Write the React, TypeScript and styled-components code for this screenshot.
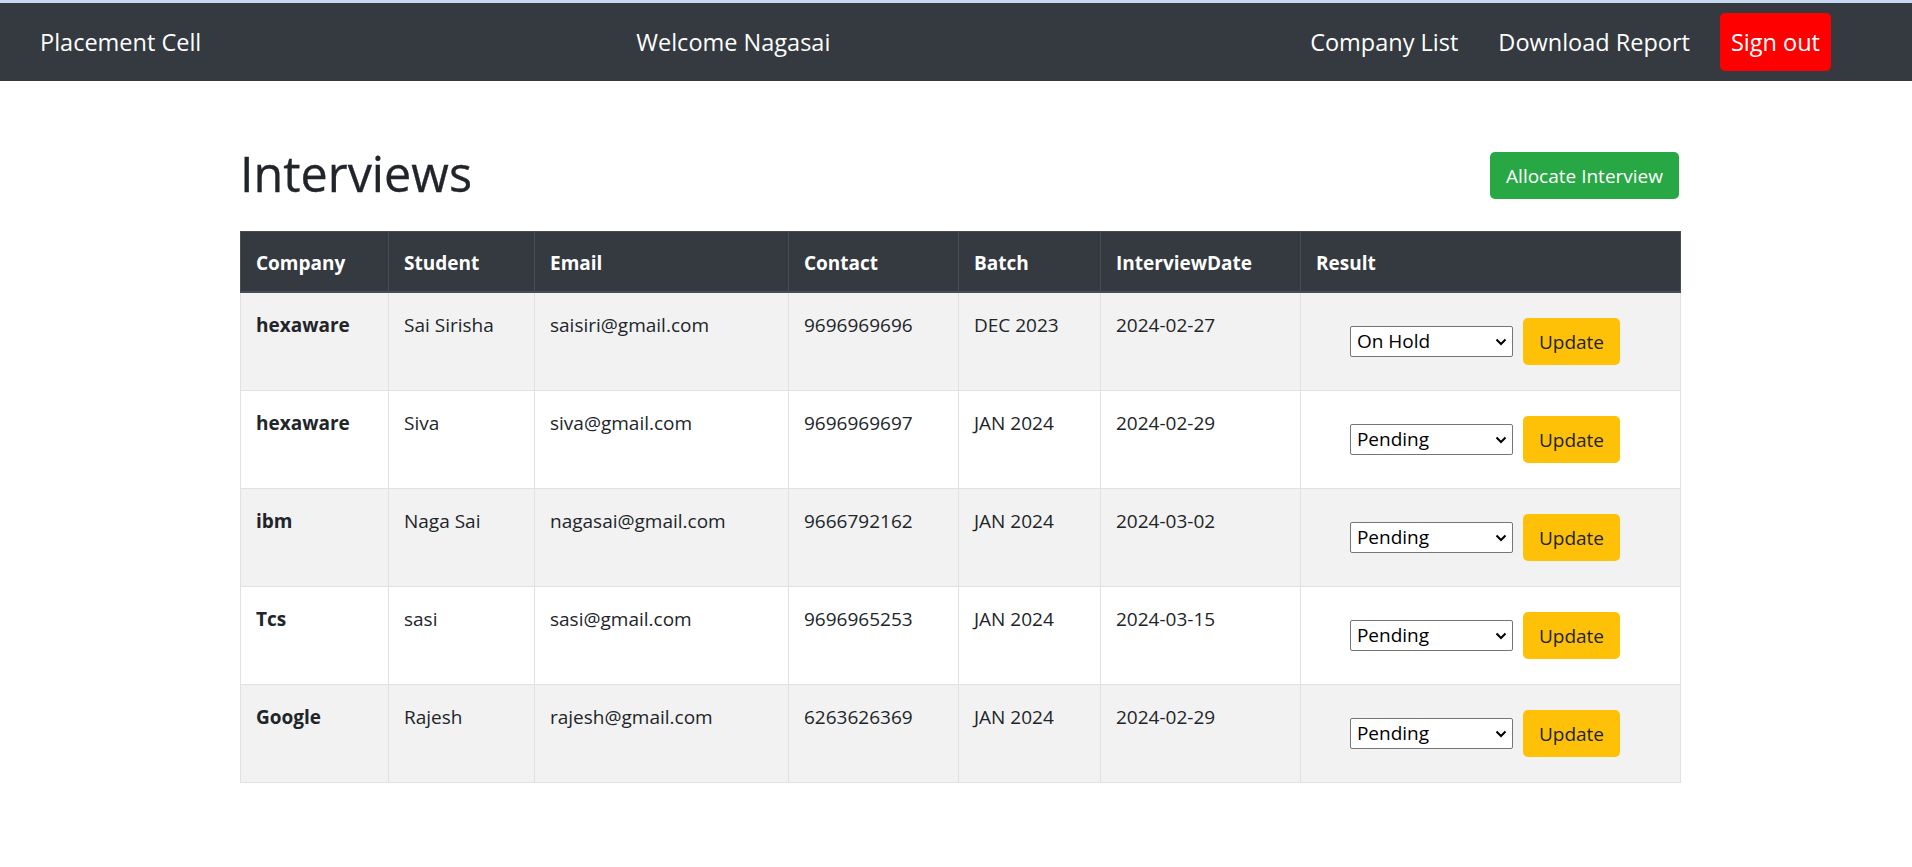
import React from "react";
import styled, { createGlobalStyle } from "styled-components";

const GlobalStyle = createGlobalStyle`
  html, body { margin: 0; padding: 0; background: #ffffff; }
  body {
    font-family: "Open Sans", "Noto Sans", "Liberation Sans", sans-serif;
    color: #212529;
    font-size: 19px;
    line-height: 30px;
  }
  * { box-sizing: border-box; }
`;

const TopStrip = styled.div`
  height: 3px;
  background: #c6d9f1;
`;

const Navbar = styled.nav`
  display: flex;
  align-items: center;
  height: 78px;
  background: #343a40;
  padding: 0 81px 0 40px;
`;

const Brand = styled.a`
  color: #ffffff;
  font-size: 23.5px;
  line-height: 35px;
  text-decoration: none;
  white-space: nowrap;
`;

const Welcome = styled.span`
  color: #ffffff;
  font-size: 23.5px;
  line-height: 35px;
  margin-left: 435px;
  white-space: nowrap;
`;

const NavLinks = styled.div`
  display: flex;
  align-items: center;
  margin-left: auto;
`;

const NavLink = styled.a<{ $gap: number }>`
  color: #ffffff;
  font-size: 23.5px;
  line-height: 35px;
  text-decoration: none;
  white-space: nowrap;
  margin-right: ${(p) => p.$gap}px;
`;

const SignOut = styled.button`
  background: #ff0000;
  color: #ffffff;
  border: none;
  border-radius: 5px;
  font-family: inherit;
  font-size: 23.5px;
  line-height: 35px;
  height: 58px;
  padding: 0 11px;
  cursor: pointer;
`;

const Main = styled.main`
  width: 1440px;
  margin-left: 240px;
  padding-top: 62px;
`;

const HeaderRow = styled.div`
  display: flex;
  align-items: flex-start;
  justify-content: space-between;
  height: 60px;
  margin-bottom: 28px;
`;

const Title = styled.h1`
  margin: 0;
  font-size: 48.5px;
  font-weight: 500;
  line-height: 60px;
  color: #212529;
  -webkit-text-stroke: 0.3px #212529;
`;

const Button = styled.button<{ $variant: "success" | "warning" }>`
  border: none;
  border-radius: 5px;
  font-family: inherit;
  font-size: 19px;
  line-height: 30px;
  height: 47px;
  padding: 0 16px;
  cursor: pointer;
  background: ${(p) => (p.$variant === "success" ? "#28a745" : "#ffc107")};
  color: ${(p) => (p.$variant === "success" ? "#ffffff" : "#212529")};
`;

const Allocate = styled(Button)`
  margin-top: 9px;
  margin-right: 1px;
`;

const Table = styled.table`
  width: 1440px;
  border-collapse: collapse;
  table-layout: fixed;
`;

const Th = styled.th`
  background: #343a40;
  color: #ffffff;
  font-weight: 700;
  text-align: left;
  padding: 16px 15px 13px;
  border: 1px solid #454d55;
  border-bottom-width: 2px;
  line-height: 30px;
`;

const Tr = styled.tr<{ $striped: boolean }>`
  background: ${(p) => (p.$striped ? "#f2f2f2" : "#ffffff")};
`;

const Td = styled.td<{ $bold?: boolean }>`
  padding: 17px 15px 13px;
  border: 1px solid #dee2e6;
  vertical-align: top;
  font-weight: ${(p) => (p.$bold ? 700 : 400)};
  line-height: 30px;
`;

const ResultCell = styled.td`
  padding: 25px 26px 25px 15px;
  border: 1px solid #dee2e6;
  vertical-align: top;
`;

const ResultForm = styled.form`
  display: flex;
  align-items: center;
  justify-content: center;
  gap: 10px;
`;

const SelectWrap = styled.div`
  position: relative;
  width: 163px;
  height: 31px;
`;

const Select = styled.select`
  appearance: none;
  -webkit-appearance: none;
  width: 163px;
  height: 31px;
  border: 1px solid #767676;
  border-radius: 2px;
  background: #ffffff;
  font-family: inherit;
  font-size: 19px;
  color: #000000;
  padding: 0 24px 0 6px;
  line-height: 29px;
`;

const Chevron = styled.svg`
  position: absolute;
  right: 6px;
  top: 12px;
  width: 12px;
  height: 8px;
  pointer-events: none;
`;

type Row = {
  company: string;
  student: string;
  email: string;
  contact: string;
  batch: string;
  date: string;
  result: string;
};

const rows: Row[] = [
  { company: "hexaware", student: "Sai Sirisha", email: "saisiri@gmail.com", contact: "9696969696", batch: "DEC 2023", date: "2024-02-27", result: "On Hold" },
  { company: "hexaware", student: "Siva", email: "siva@gmail.com", contact: "9696969697", batch: "JAN 2024", date: "2024-02-29", result: "Pending" },
  { company: "ibm", student: "Naga Sai", email: "nagasai@gmail.com", contact: "9666792162", batch: "JAN 2024", date: "2024-03-02", result: "Pending" },
  { company: "Tcs", student: "sasi", email: "sasi@gmail.com", contact: "9696965253", batch: "JAN 2024", date: "2024-03-15", result: "Pending" },
  { company: "Google", student: "Rajesh", email: "rajesh@gmail.com", contact: "6263626369", batch: "JAN 2024", date: "2024-02-29", result: "Pending" },
];

const columns = [
  { label: "Company", width: 148 },
  { label: "Student", width: 146 },
  { label: "Email", width: 254 },
  { label: "Contact", width: 170 },
  { label: "Batch", width: 142 },
  { label: "InterviewDate", width: 200 },
  { label: "Result", width: 380 },
];

const options = ["Pending", "Selected", "Not Selected", "On Hold", "Did not Attempt"];

export default function App() {
  return (
    <>
      <GlobalStyle />
      <TopStrip />
      <Navbar>
        <Brand href="#">Placement Cell</Brand>
        <Welcome>Welcome Nagasai</Welcome>
        <NavLinks>
          <NavLink href="#" $gap={40}>Company List</NavLink>
          <NavLink href="#" $gap={30}>Download Report</NavLink>
          <SignOut>Sign out</SignOut>
        </NavLinks>
      </Navbar>
      <Main>
        <HeaderRow>
          <Title>Interviews</Title>
          <Allocate $variant="success">Allocate Interview</Allocate>
        </HeaderRow>
        <Table>
          <colgroup>
            {columns.map((c) => (
              <col key={c.label} style={{ width: c.width }} />
            ))}
          </colgroup>
          <thead>
            <tr>
              {columns.map((c) => (
                <Th key={c.label}>{c.label}</Th>
              ))}
            </tr>
          </thead>
          <tbody>
            {rows.map((r, i) => (
              <Tr key={i} $striped={i % 2 === 0}>
                <Td $bold>{r.company}</Td>
                <Td>{r.student}</Td>
                <Td>{r.email}</Td>
                <Td>{r.contact}</Td>
                <Td>{r.batch}</Td>
                <Td>{r.date}</Td>
                <ResultCell>
                  <ResultForm onSubmit={(e) => e.preventDefault()}>
                    <SelectWrap>
                      <Select defaultValue={r.result}>
                        {options.map((o) => (
                          <option key={o} value={o}>{o}</option>
                        ))}
                      </Select>
                      <Chevron viewBox="0 0 12 8">
                        <path d="M1.5 1.5 L6 6 L10.5 1.5" fill="none" stroke="#000" strokeWidth="2" />
                      </Chevron>
                    </SelectWrap>
                    <Button $variant="warning" type="submit">Update</Button>
                  </ResultForm>
                </ResultCell>
              </Tr>
            ))}
          </tbody>
        </Table>
      </Main>
    </>
  );
}
